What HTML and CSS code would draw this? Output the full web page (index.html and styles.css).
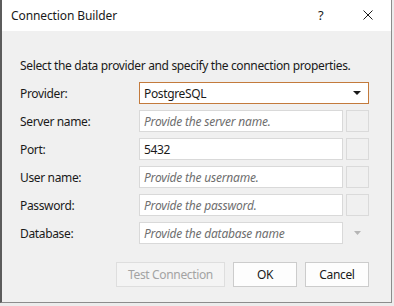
FILE: index.html
```html
<!DOCTYPE html>
<html>
<head>
<meta charset="utf-8">
<link rel="stylesheet" href="styles.css">
</head>
<body>
<div class="window">
  <div class="titlebar">
    <span class="title">Connection Builder</span>
    <span class="help">?</span>
    <span class="close"><svg width="10" height="10" viewBox="0 0 10 10"><path d="M0.5 0.5 L9.5 9.5 M9.5 0.5 L0.5 9.5" stroke="#1a1a1a" stroke-width="1" fill="none"/></svg></span>
  </div>
  <div class="body">
    <p class="intro">Select the data provider and specify the connection properties.</p>
    <div class="form">
      <label class="lbl">Provider:</label>
      <div class="combo"><span>PostgreSQL</span><svg class="arrow" width="8" height="4" viewBox="0 0 8 4"><path d="M0 0 H8 L4 4 Z" fill="#1a1a1a"/></svg></div>

      <label class="lbl">Server name:</label>
      <div class="input ph">Provide the server name.</div>
      <div class="sbtn"></div>

      <label class="lbl">Port:</label>
      <div class="input">5432</div>
      <div class="sbtn"></div>

      <label class="lbl">User name:</label>
      <div class="input ph">Provide the username.</div>
      <div class="sbtn"></div>

      <label class="lbl">Password:</label>
      <div class="input ph">Provide the password.</div>
      <div class="sbtn"></div>

      <label class="lbl">Database:</label>
      <div class="input ph">Provide the database name</div>
      <div class="sbtn dd"><svg width="7" height="4" viewBox="0 0 7 4"><path d="M0 0 H7 L3.5 4 Z" fill="#b5b5b5"/></svg></div>
    </div>
    <div class="buttons">
      <button class="btn disabled">Test Connection</button>
      <button class="btn ok">OK</button>
      <button class="btn cancel">Cancel</button>
    </div>
  </div>
</div>
</body>
</html>
```

FILE: styles.css
```css
html, body {
  margin: 0;
  padding: 0;
}
body {
  background: #ececec;
  width: 394px;
  height: 306px;
  overflow: hidden;
  font-family: "Noto Sans", "Open Sans", sans-serif;
  font-size: 12px;
  letter-spacing: -0.35px;
  color: #1a1a1a;
}
.window {
  width: 389px;
  height: 302px;
  border-left: 2px solid #5c5c5c;
  border-right: 1px solid #8c8c8c;
  border-bottom: 1px solid #8c8c8c;
  background: #f0f0f0;
  display: flex;
  flex-direction: column;
}
.titlebar {
  height: 31px;
  background: #ffffff;
  display: flex;
  align-items: center;
  padding-left: 9px;
  flex-shrink: 0;
}
.title {
  font-size: 12px;
  letter-spacing: -0.1px;
  flex: 1;
  padding-bottom: 1px;
}
.help {
  font-size: 13px;
  width: 8px;
  margin-right: 37px;
  padding-bottom: 2px;
}
.close {
  width: 10px;
  height: 10px;
  margin-right: 18px;
  margin-bottom: 1px;
  display: flex;
}
.body {
  flex: 1;
  padding: 0 22px 0 17px;
  display: flex;
  flex-direction: column;
}
.intro {
  margin: 27px 0 0 1px;
  line-height: 16px;
  height: 16px;
  white-space: nowrap;
}
.form {
  margin-top: 8px;
  display: grid;
  grid-template-columns: 117px 204px 23px;
  column-gap: 3px;
  row-gap: 6px;
  grid-auto-rows: 22px;
}
.lbl {
  padding-left: 1px;
  display: flex;
  align-items: center;
}
.combo {
  grid-column: 2 / 4;
  box-sizing: border-box;
  border: 1px solid #c37a3c;
  background: #ffffff;
  display: flex;
  align-items: center;
  padding: 0 7px 0 4px;
  justify-content: space-between;
}
.input {
  box-sizing: border-box;
  border: 1px solid #d9d9d9;
  background: #ffffff;
  display: flex;
  align-items: center;
  padding-left: 4px;
  white-space: nowrap;
  overflow: hidden;
}
.ph {
  font-style: italic;
  letter-spacing: -0.2px;
  color: #6e6e6e;
}
.sbtn {
  box-sizing: border-box;
  border: 1px solid #dadada;
  background: #f0f0f0;
}
.sbtn.dd {
  border-color: transparent;
  display: flex;
  align-items: center;
  justify-content: center;
}
.buttons {
  margin-top: 18px;
  display: flex;
  justify-content: flex-end;
  gap: 8px;
}
.btn {
  box-sizing: border-box;
  height: 25px;
  font-family: "Noto Sans", "Open Sans", sans-serif;
  font-size: 12px;
  letter-spacing: -0.35px;
  background: #fdfdfd;
  border: 1px solid #cccccc;
  color: #1a1a1a;
  padding: 0;
  width: 64px;
}
.btn.disabled {
  width: 109px;
  background: #f4f4f4;
  border-color: #dedede;
  color: #a3a3a3;
}
```
